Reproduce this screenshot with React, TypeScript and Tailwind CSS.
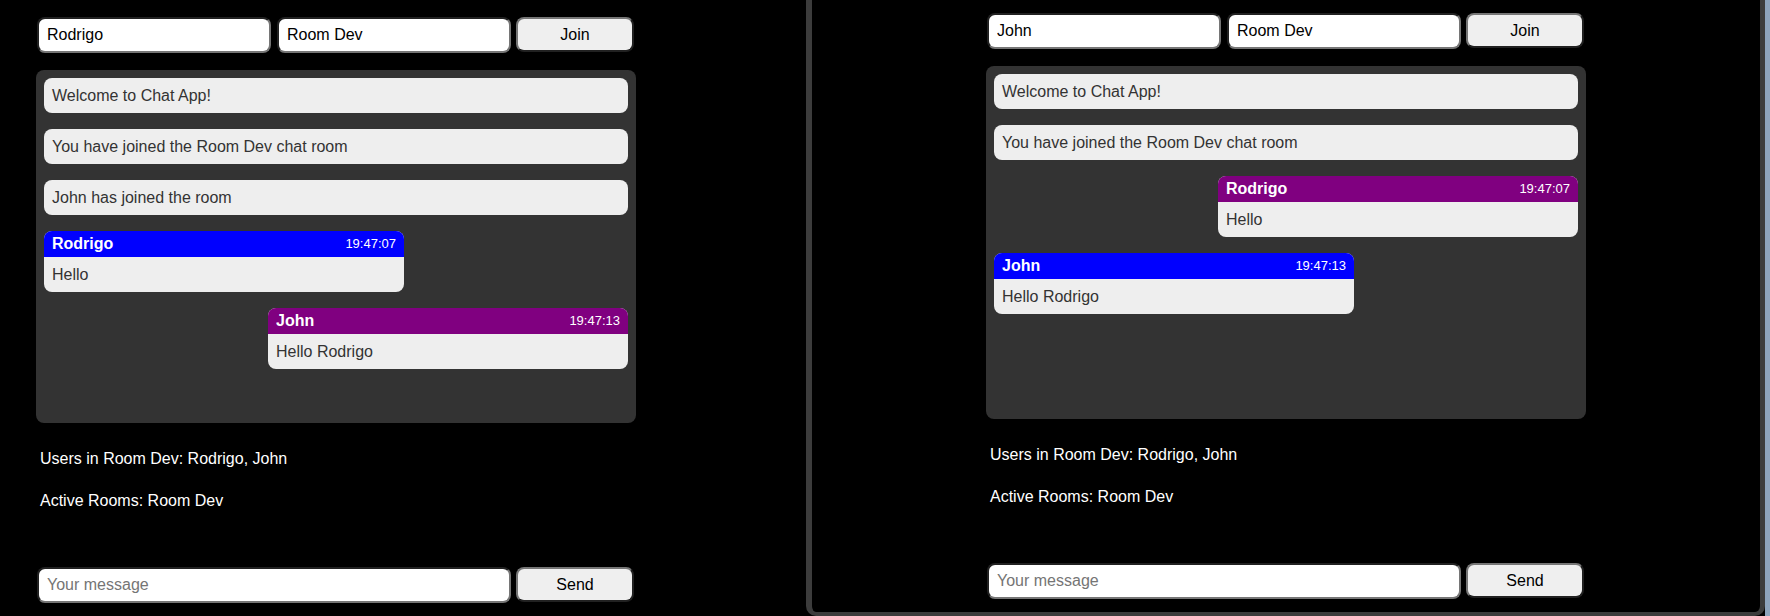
import React from 'react';

type Msg =
  | { kind: 'system'; text: string }
  | { kind: 'chat'; user: string; time: string; text: string; mine: boolean };

const leftMessages: Msg[] = [
  { kind: 'system', text: 'Welcome to Chat App!' },
  { kind: 'system', text: 'You have joined the Room Dev chat room' },
  { kind: 'system', text: 'John has joined the room' },
  { kind: 'chat', user: 'Rodrigo', time: '19:47:07', text: 'Hello', mine: true },
  { kind: 'chat', user: 'John', time: '19:47:13', text: 'Hello Rodrigo', mine: false },
];

const rightMessages: Msg[] = [
  { kind: 'system', text: 'Welcome to Chat App!' },
  { kind: 'system', text: 'You have joined the Room Dev chat room' },
  { kind: 'chat', user: 'Rodrigo', time: '19:47:07', text: 'Hello', mine: false },
  { kind: 'chat', user: 'John', time: '19:47:13', text: 'Hello Rodrigo', mine: true },
];

const inputCls =
  'h-[36px] rounded-lg border-2 border-[#767676] [border-style:inset] bg-white px-2 text-[16px] text-black outline-none placeholder:text-[#757575]';
const buttonCls =
  'h-[35px] w-[118px] rounded-lg border-2 border-[#767676] [border-style:outset] bg-[#efefef] text-[16px] text-black';

const ChatClient = ({ name, messages }: { name: string; messages: Msg[] }) => {
  return (
    <div className="w-[600px]">
      {/* Join row */}
      <div className="flex items-start">
        <input className={`${inputCls} ml-px w-[234px]`} value={name} readOnly />
        <input className={`${inputCls} ml-[6px] w-[234px]`} value="Room Dev" readOnly />
        <button className={`${buttonCls} ml-[5px]`}>Join</button>
      </div>

      {/* Messages */}
      <div className="mt-[17px] flex h-[353px] flex-col gap-4 rounded-lg bg-[#333333] p-2">
        {messages.map((m, i) =>
          m.kind === 'system' ? (
            <div key={i} className="rounded-lg bg-[#eeeeee] px-2 py-2 leading-[19px] text-[#333333]">
              {m.text}
            </div>
          ) : (
            <div
              key={i}
              className={`w-[360px] overflow-hidden rounded-lg bg-[#eeeeee] ${m.mine ? 'self-start' : 'self-end'}`}
            >
              <div
                className={`flex items-center justify-between px-2 py-1 leading-[18px] text-white ${
                  m.mine ? 'bg-[#0000ff]' : 'bg-[#800080]'
                }`}
              >
                <span className="font-bold">{m.user}</span>
                <span className="text-[13px]">{m.time}</span>
              </div>
              <div className="px-2 py-2 leading-[19px] text-[#333333]">{m.text}</div>
            </div>
          )
        )}
      </div>

      <p className="ml-1 mt-[27px] leading-[18px] text-white">Users in Room Dev: Rodrigo, John</p>
      <p className="ml-1 mt-[24px] leading-[18px] text-white">Active Rooms: Room Dev</p>

      {/* Send row */}
      <div className="mt-[57px] flex items-start">
        <input className={`${inputCls} ml-px w-[474px]`} placeholder="Your message" />
        <button className={`${buttonCls} ml-[5px]`}>Send</button>
      </div>
    </div>
  );
};

export default function App() {
  return (
    <div
      className="flex h-[616px] w-[1770px] overflow-hidden bg-black text-[16px]"
      style={{ fontFamily: '"Liberation Sans", Arial, sans-serif' }}
    >
      {/* Left browser window */}
      <div className="w-[806px] shrink-0 pl-[36px] pt-[17px]">
        <ChatClient name="Rodrigo" messages={leftMessages} />
      </div>

      {/* Right browser window */}
      <div className="h-[616px] w-[959px] shrink-0 rounded-b-[10px] border-b-[4px] border-l-[6px] border-r-[5px] border-[#3c3c3c] bg-black pt-[13px]">
        <div className="flex justify-center">
          <ChatClient name="John" messages={rightMessages} />
        </div>
      </div>

      <div className="h-[616px] flex-1 bg-[#8da3bb]" />
    </div>
  );
}
